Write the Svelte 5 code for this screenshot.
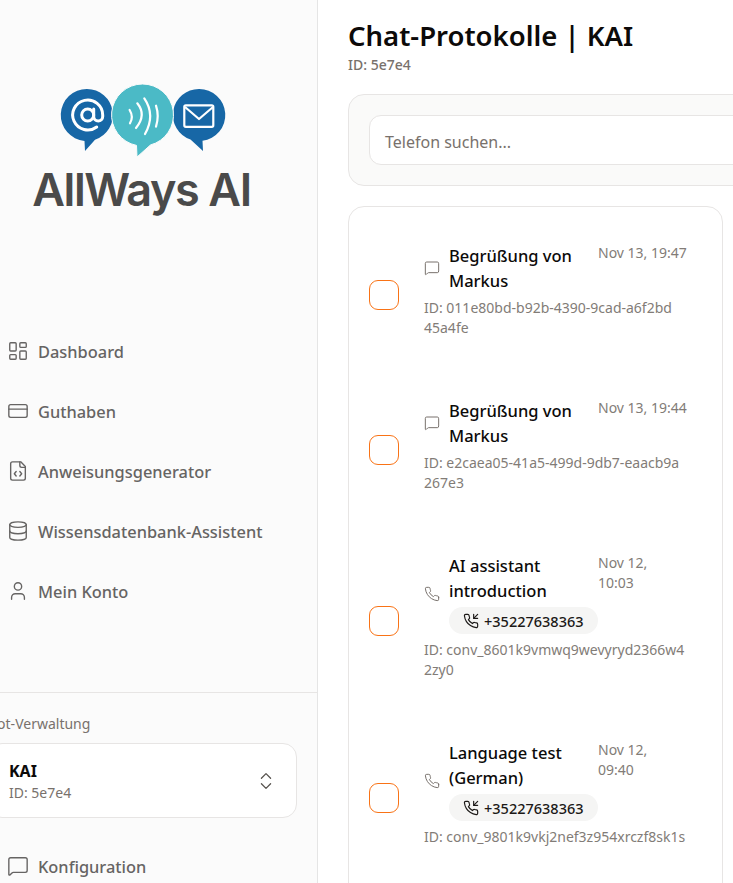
<script lang="ts">
  const nav = [
    { label: "Dashboard", icon: "dashboard" },
    { label: "Guthaben", icon: "card" },
    { label: "Anweisungsgenerator", icon: "file" },
    { label: "Wissensdatenbank-Assistent", icon: "database" },
    { label: "Mein Konto", icon: "user" },
  ];

  const phoneD =
    "M22 16.92v3a2 2 0 0 1-2.18 2 19.79 19.79 0 0 1-8.63-3.07 19.5 19.5 0 0 1-6-6 19.79 19.79 0 0 1-3.07-8.67A2 2 0 0 1 4.11 2h3a2 2 0 0 1 2 1.72 12.84 12.84 0 0 0 .7 2.81 2 2 0 0 1-.45 2.11L8.09 9.91a16 16 0 0 0 6 6l1.27-1.27a2 2 0 0 1 2.11-.45 12.84 12.84 0 0 0 2.81.7A2 2 0 0 1 22 16.92z";

  const logs = [
    {
      title: "Begrüßung von Markus",
      date: ["Nov 13, 19:47"],
      id: ["ID: 011e80bd-b92b-4390-9cad-a6f2bd", "45a4fe"],
      kind: "chat",
    },
    {
      title: "Begrüßung von Markus",
      date: ["Nov 13, 19:44"],
      id: ["ID: e2caea05-41a5-499d-9db7-eaacb9a", "267e3"],
      kind: "chat",
    },
    {
      title: "AI assistant introduction",
      date: ["Nov 12,", "10:03"],
      id: ["ID: conv_8601k9vmwq9wevyryd2366w4", "2zy0"],
      kind: "call",
      phone: "+35227638363",
    },
    {
      title: "Language test (German)",
      date: ["Nov 12,", "09:40"],
      id: ["ID: conv_9801k9vkj2nef3z954xrczf8sk1s"],
      kind: "call",
      phone: "+35227638363",
    },
  ];
</script>

{#snippet icon(name: string, size: number, sw = 1.5)}
  <svg class="ico" width={size} height={size} viewBox="0 0 24 24" fill="none" stroke="currentColor" stroke-width={sw} stroke-linecap="round" stroke-linejoin="round">
    {#if name === "dashboard"}
      <rect x="3" y="3" width="7" height="9" rx="1" /><rect x="14" y="3" width="7" height="5" rx="1" /><rect x="14" y="12" width="7" height="9" rx="1" /><rect x="3" y="16" width="7" height="5" rx="1" />
    {:else if name === "card"}
      <rect x="2" y="5" width="20" height="14" rx="2" /><line x1="2" y1="10" x2="22" y2="10" />
    {:else if name === "file"}
      <path d="M10 12.5 8 15l2 2.5" /><path d="m14 12.5 2 2.5-2 2.5" /><path d="M14 2v4a2 2 0 0 0 2 2h4" /><path d="M15 2H6a2 2 0 0 0-2 2v16a2 2 0 0 0 2 2h12a2 2 0 0 0 2-2V7z" />
    {:else if name === "database"}
      <ellipse cx="12" cy="5" rx="9" ry="3" /><path d="M3 5V19A9 3 0 0 0 21 19V5" /><path d="M3 12A9 3 0 0 0 21 12" />
    {:else if name === "user"}
      <path d="M19 21v-2a4 4 0 0 0-4-4H9a4 4 0 0 0-4 4v2" /><circle cx="12" cy="7" r="4" />
    {:else if name === "chat"}
      <path d="M22 17a2 2 0 0 1-2 2H6.828a2 2 0 0 0-1.414.586l-2.202 2.202A.71.71 0 0 1 2 21.286V5a2 2 0 0 1 2-2h16a2 2 0 0 1 2 2z" />
    {:else if name === "call"}
      <path d={phoneD} />
    {:else if name === "incoming"}
      <polyline points="16 2 16 8 22 8" /><line x1="22" y1="2" x2="16" y2="8" /><path d={phoneD} />
    {:else if name === "updown"}
      <path d="m7 15 5 5 5-5" /><path d="m7 9 5-5 5 5" />
    {/if}
  </svg>
{/snippet}

<div class="page">
  <aside class="sidebar">
    <div class="brand">
      <svg class="logo-mark" width="166" height="74" viewBox="0 0 166 74" fill="none">
        <!-- left bubble -->
        <path d="M26 0A26 26 0 0 1 34 50.700L24 62L23.500 51.900A26 26 0 0 1 26 0z" fill="#1767a6" />
        <g transform="translate(8.700 8) scale(1.500)" stroke="#fff" stroke-width="2" stroke-linecap="round" stroke-linejoin="round">
          <circle cx="12" cy="12" r="4" />
          <path d="M16 8v5a3 3 0 0 0 6 0v-1a10 10 0 1 0-4 8" />
        </g>
        <!-- right bubble -->
        <path d="M138 0A26 26 0 0 1 141.500 51.800L142 62L129.500 50.600A26 26 0 0 1 138 0z" fill="#1767a6" />
        <rect x="123.300" y="16.300" width="29" height="21.500" rx="1.500" stroke="#fff" stroke-width="2.200" />
        <path d="M124 18l14 12 14-12" stroke="#fff" stroke-width="2.200" stroke-linejoin="round" />
        <!-- middle bubble -->
        <path d="M81.500 -5A31 31 0 0 1 89.500 55.950L76 68L75.500 56.400A31 31 0 0 1 81.500 -5z" fill="#4bbac6" stroke="#fbfbfb" stroke-width="1" />
        <g stroke="#fff" stroke-width="2.200" stroke-linecap="round" fill="none">
          <path d="M68.600 21Q72.800 27.700 69 34.300" />
          <path d="M76.300 14.300Q85.800 26 75 39" />
          <path d="M83.300 9.300Q94.700 26 84 45" />
          <path d="M95 16.700Q98.400 27 95 37.700" />
        </g>
      </svg>
      <div class="wordmark">AllWays AI</div>
    </div>

    <nav class="nav">
      {#each nav as item}
        <div class="nav-item">
          {@render icon(item.icon, 22)}
          <span>{item.label}</span>
        </div>
      {/each}
    </nav>

    <section class="bots">
      <div class="bots-label">Bot-Verwaltung</div>
      <div class="bot-select">
        <div>
          <div class="bot-name">KAI</div>
          <div class="bot-id">ID: 5e7e4</div>
        </div>
        {@render icon("updown", 22, 1.4)}
      </div>
      <div class="nav-item">
        {@render icon("chat", 22)}
        <span>Konfiguration</span>
      </div>
    </section>
  </aside>

  <main class="main">
    <h1>Chat-Protokolle | KAI</h1>
    <div class="sub">ID: 5e7e4</div>

    <div class="filter">
      <div class="search">Telefon suchen...</div>
    </div>

    <div class="list">
      {#each logs as log}
        <div class="row">
          <span class="check"></span>
          <div class="content">
            <div class="head">
              <span class="kind">{@render icon(log.kind, 16, 1.5)}</span>
              <div class="head-text">
                <div class="title">{log.title}</div>
                {#if log.phone}
                  <div class="chip">
                    {@render icon("incoming", 16, 1.75)}
                    <span>{log.phone}</span>
                  </div>
                {/if}
              </div>
              <div class="date">
                {#each log.date as line}
                  <div>{line}</div>
                {/each}
              </div>
            </div>
            <div class="log-id">
              {#each log.id as line}
                <div>{line}</div>
              {/each}
            </div>
          </div>
        </div>
      {/each}
    </div>
  </main>
</div>

<style>
  :global(body) {
    margin: 0;
    overflow: hidden;
    background: #fff;
  }

  .page {
    display: flex;
    width: 733px;
    height: 883px;
    overflow: hidden;
    font-family: "Noto Sans", "Open Sans", sans-serif;
    color: #0c0a09;
  }

  .ico {
    flex: none;
    display: block;
  }

  .sidebar {
    flex: none;
    box-sizing: border-box;
    width: 350px;
    height: 883px;
    margin-left: -32px;
    overflow: hidden;
    background: #fbfbfb;
    border-right: 1px solid #e5e5e5;
  }

  .brand {
    height: 321px;
    box-sizing: border-box;
    padding-top: 89px;
    display: flex;
    flex-direction: column;
    align-items: center;
  }

  .logo-mark {
    overflow: visible;
    margin-left: 3px;
  }

  .wordmark {
    margin: 1px 0 0 -2px;
    font-family: Inter, sans-serif;
    font-weight: 600;
    font-size: 45px;
    line-height: 52px;
    letter-spacing: -1.4px;
    color: #4a4a4a;
  }

  .nav-item {
    display: flex;
    align-items: center;
    gap: 9px;
    height: 60px;
    padding-left: 39px;
    font-size: 16.4px;
    font-weight: 500;
    color: #666463;
  }

  .bots {
    margin-top: 71px;
    border-top: 1px solid #e7e5e4;
    padding-top: 21px;
  }

  .bots-label {
    padding-left: 20px;
    font-size: 14px;
    line-height: 20px;
    color: #78716c;
  }

  .bot-select {
    display: flex;
    align-items: center;
    justify-content: space-between;
    box-sizing: border-box;
    height: 75px;
    margin: 9px 20px 0;
    padding: 0 19px 0 20px;
    background: #fff;
    border: 1px solid #e7e5e4;
    border-radius: 14px;
    color: #57534e;
  }

  .bot-name {
    font-size: 16px;
    line-height: 24px;
    font-weight: 700;
    color: #0c0a09;
  }

  .bot-id {
    font-size: 14px;
    line-height: 20px;
    color: #78716c;
  }

  .bots .nav-item {
    margin-top: 18px;
  }

  .main {
    flex: none;
    padding: 16px 0 0 30px;
  }

  h1 {
    margin: 0;
    font-size: 27.5px;
    line-height: 39px;
    font-weight: 600;
    color: #0c0a09;
  }

  .sub {
    font-size: 14px;
    line-height: 20px;
    font-weight: 500;
    color: #78716c;
  }

  .filter {
    box-sizing: border-box;
    width: 420px;
    height: 92px;
    margin-top: 19px;
    padding: 20px;
    background: #fafaf9;
    border: 1px solid #e7e5e4;
    border-radius: 16px;
  }

  .search {
    box-sizing: border-box;
    height: 50px;
    padding: 3px 0 0 15px;
    display: flex;
    align-items: center;
    background: #fff;
    border: 1px solid #e7e5e4;
    border-radius: 12px;
    font-size: 16px;
    color: #78716c;
  }

  .list {
    box-sizing: border-box;
    width: 375px;
    height: 760px;
    margin-top: 20px;
    padding: 36px 34px 0 20px;
    background: #fff;
    border: 1px solid #e7e5e4;
    border-radius: 16px;
    display: flex;
    flex-direction: column;
    gap: 60px;
  }

  .row {
    display: flex;
    align-items: center;
    gap: 25px;
  }

  .check {
    flex: none;
    box-sizing: border-box;
    width: 30px;
    height: 30px;
    margin-top: 8px;
    border: 1px solid #f97316;
    border-radius: 9px;
    background: #fff;
  }

  .content {
    min-width: 0;
    flex: 1;
  }

  .head {
    display: flex;
    align-items: flex-start;
  }

  .kind {
    flex: none;
    align-self: center;
    margin-right: 9px;
    color: #78716c;
  }

  .head-text {
    flex: 1;
    min-width: 0;
  }

  .title {
    width: 135px;
    font-size: 16.5px;
    line-height: 25px;
    font-weight: 500;
    color: #0c0a09;
  }

  .chip {
    display: inline-flex;
    align-items: center;
    gap: 5px;
    height: 27px;
    margin: 4px 0 1px;
    padding: 0 14px;
    border-radius: 999px;
    background: #f5f5f4;
    font-size: 14.5px;
    font-weight: 500;
    color: #1c1917;
    vertical-align: top;
  }

  .date {
    flex: none;
    width: 90px;
    font-size: 14px;
    line-height: 20px;
    color: #827c77;
    white-space: nowrap;
  }

  .log-id {
    margin-top: 5px;
    font-size: 14px;
    line-height: 20px;
    color: #827c77;
    white-space: nowrap;
  }
</style>
